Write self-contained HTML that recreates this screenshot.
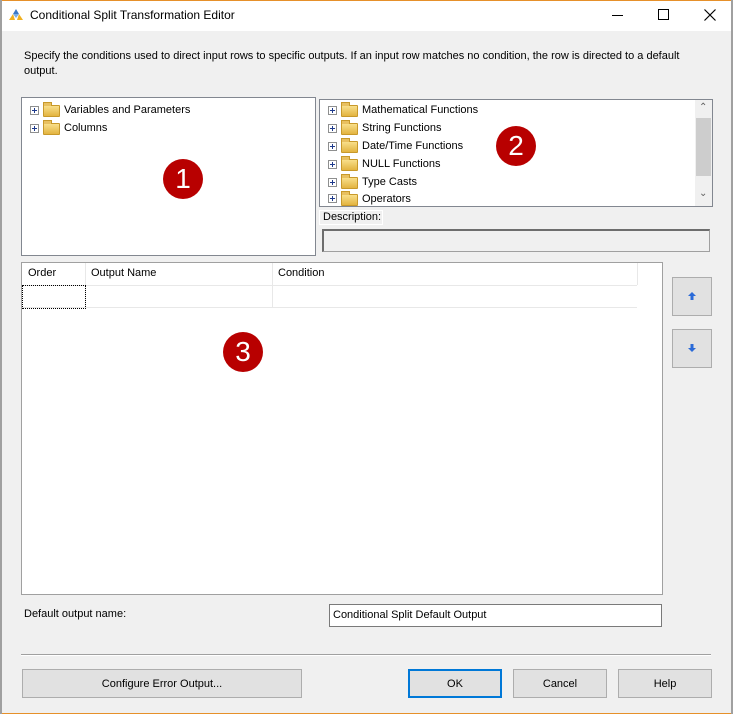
<!DOCTYPE html><html><head><style>
*{box-sizing:border-box;margin:0;padding:0}
body{width:733px;height:714px;overflow:hidden;background:#f0f0f0;font-family:"Liberation Sans",sans-serif;font-size:11px;color:#000;position:relative}
.a{position:absolute}
.box{position:absolute;background:#fff;border:1px solid #828790}
.item{position:absolute;height:18px;display:flex;align-items:center;white-space:nowrap}
.pl{width:9px;height:9px;border:1px solid #8e8f8f;background:#fff;position:relative;margin-right:4px}
.pl:before{content:"";position:absolute;left:1px;top:3px;width:5px;height:1px;background:#1e3a8c}
.pl:after{content:"";position:absolute;left:3px;top:1px;width:1px;height:5px;background:#1e3a8c}
.fd{width:17px;height:12px;margin-right:4px;background:linear-gradient(#f8df8a,#e3b440);border:1px solid #c8992a;border-radius:1px;position:relative;margin-top:2px}
.fd:before{content:"";position:absolute;left:-1px;top:-4px;width:7px;height:3px;background:#e8c060;border:1px solid #c8992a;border-bottom:none}
.badge{position:absolute;width:40px;height:40px;border-radius:50%;background:#b80000;color:#fff;font-size:28px;text-align:center;line-height:40px}
.btn{position:absolute;background:#e1e1e1;border:1px solid #adadad;text-align:center;line-height:28px;height:29px}
</style></head><body>
<div class="a" style="left:0;top:0;width:733px;height:1px;background:#e6902a"></div>
<div class="a" style="left:0;top:713px;width:733px;height:1px;background:#e6902a"></div>
<div class="a" style="left:0;top:0;width:2px;height:714px;background:#a0a0a0"></div>
<div class="a" style="left:731px;top:0;width:2px;height:714px;background:#a0a0a0"></div>
<div class="a" style="left:2px;top:1px;width:729px;height:30px;background:#fff"></div>
<svg class="a" style="left:8px;top:8px" width="16" height="14"><path d="M8 1 L11 6 L5 6Z" fill="#3a78c8"/><path d="M5 6 L1 12 L7 12Z M11 6 L15 12 L9 12Z" fill="#f0b020"/><path d="M5 6 L11 6 L8 10Z" fill="#7aaee8"/></svg>
<div class="a" style="left:30px;top:8px;font-size:12px">Conditional Split Transformation Editor</div>
<div class="a" style="left:612px;top:15px;width:11px;height:1px;background:#000"></div>
<div class="a" style="left:658px;top:9px;width:11px;height:11px;border:1px solid #000"></div>
<svg class="a" style="left:704px;top:9px" width="12" height="12"><path d="M0.5 0.5 L11.5 11.5 M11.5 0.5 L0.5 11.5" stroke="#000" stroke-width="1.2"/></svg>
<div class="a" style="left:24px;top:49px;width:690px;line-height:15px">Specify the conditions used to direct input rows to specific outputs. If an input row matches no condition, the row is directed to a default output.</div>
<div class="box" style="left:21px;top:97px;width:295px;height:159px"></div>
<div class="item" style="left:30px;top:101px"><span class="pl"></span><span class="fd"></span>Variables and Parameters</div>
<div class="item" style="left:30px;top:119px"><span class="pl"></span><span class="fd"></span>Columns</div>
<div class="badge" style="left:163px;top:159px">1</div>
<div class="box" style="left:319px;top:99px;width:394px;height:108px;overflow:hidden">
<div class="a" style="left:375px;top:0;width:17px;height:106px;background:#f0f0f0"></div>
<div class="a" style="left:376px;top:18px;width:15px;height:58px;background:#cdcdcd"></div>
<div class="a" style="left:379px;top:2px;font-size:10px;color:#606060">&#8963;</div>
<div class="a" style="left:379px;top:88px;font-size:10px;color:#606060">&#8964;</div>
</div>
<div class="item" style="left:328px;top:101px"><span class="pl"></span><span class="fd"></span>Mathematical Functions</div>
<div class="item" style="left:328px;top:119px"><span class="pl"></span><span class="fd"></span>String Functions</div>
<div class="item" style="left:328px;top:137px"><span class="pl"></span><span class="fd"></span>Date/Time Functions</div>
<div class="item" style="left:328px;top:155px"><span class="pl"></span><span class="fd"></span>NULL Functions</div>
<div class="item" style="left:328px;top:173px"><span class="pl"></span><span class="fd"></span>Type Casts</div>
<div class="item" style="left:328px;top:191px;height:15px;overflow:hidden"><span class="pl"></span><span class="fd"></span>Operators</div>
<div class="badge" style="left:496px;top:126px">2</div>
<div class="a" style="left:319px;top:210px;width:64px;height:15px;border:1px solid #fff;background:#f0f0f0;padding-left:3px;line-height:13px;font-size:11px">Description:</div>
<div class="a" style="left:322px;top:229px;width:388px;height:23px;border:1px solid #a0a0a0;border-top:2px solid #6d6d6d;border-left:2px solid #6d6d6d;background:#f0f0f0"></div>
<div class="box" style="left:21px;top:262px;width:642px;height:333px;border-color:#a0a0a0"></div>
<div class="a" style="left:22px;top:263px;width:615px;height:45px;border-bottom:1px solid #e8e8e8"></div>
<div class="a" style="left:22px;top:285px;width:615px;height:1px;background:#e8e8e8"></div>
<div class="a" style="left:85px;top:263px;width:1px;height:45px;background:#e8e8e8"></div>
<div class="a" style="left:272px;top:263px;width:1px;height:45px;background:#e8e8e8"></div>
<div class="a" style="left:637px;top:263px;width:1px;height:22px;background:#e8e8e8"></div>
<div class="a" style="left:28px;top:267px">Order</div>
<div class="a" style="left:91px;top:267px">Output Name</div>
<div class="a" style="left:278px;top:267px">Condition</div>
<div class="a" style="left:22px;top:285px;width:64px;height:24px;border:1px dotted #000"></div>
<div class="badge" style="left:223px;top:332px">3</div>
<div class="btn" style="left:672px;top:277px;width:40px;height:39px;background:#e1e1e1"><svg width="10" height="10" style="margin-top:13px"><path d="M5 1 L9 5 L6.5 5 L6.5 9 L3.5 9 L3.5 5 L1 5Z" fill="#2a6ad8"/></svg></div>
<div class="btn" style="left:672px;top:329px;width:40px;height:39px"><svg width="10" height="10" style="margin-top:13px"><path d="M5 9 L9 5 L6.5 5 L6.5 1 L3.5 1 L3.5 5 L1 5Z" fill="#2a6ad8"/></svg></div>
<div class="a" style="left:24px;top:608px">Default output name:</div>
<div class="a" style="left:329px;top:604px;width:333px;height:23px;background:#fff;border:1px solid #7a7a7a;padding:4px 3px;">Conditional Split Default Output</div>
<div class="a" style="left:21px;top:654px;width:690px;height:1px;background:#a0a0a0"></div>
<div class="a" style="left:21px;top:655px;width:690px;height:1px;background:#fff"></div>
<div class="btn" style="left:22px;top:669px;width:280px">Configure Error Output...</div>
<div class="btn" style="left:408px;top:669px;width:94px;border:2px solid #0078d7;line-height:26px">OK</div>
<div class="btn" style="left:513px;top:669px;width:94px">Cancel</div>
<div class="btn" style="left:618px;top:669px;width:94px">Help</div>
</body></html>
